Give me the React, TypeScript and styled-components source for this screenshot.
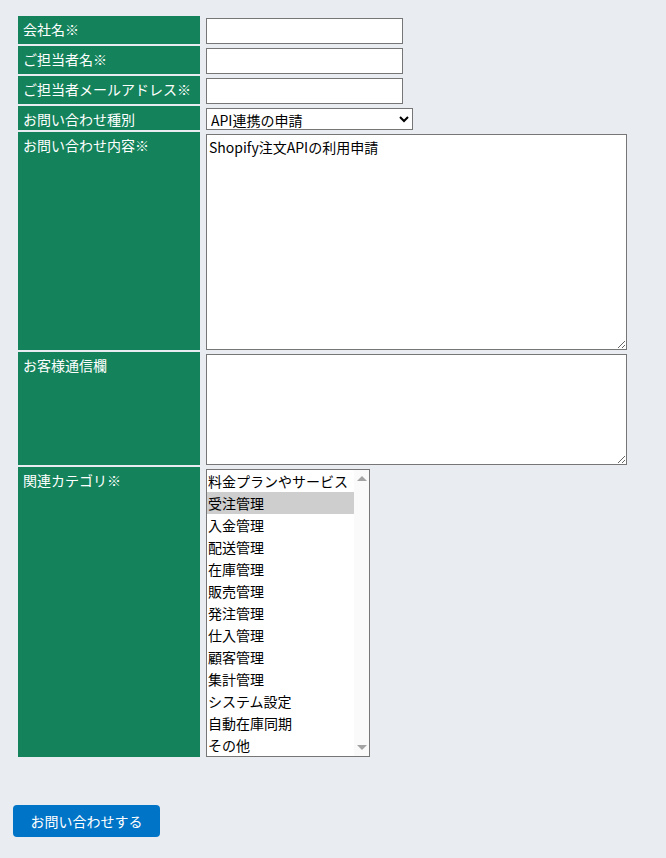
import React, { FC, useState } from 'react';
import styled, { createGlobalStyle } from 'styled-components';

const GlobalStyle = createGlobalStyle`
  body {
    margin: 0;
    background: #e9ecf1;
    font-family: "Noto Sans CJK JP", "Noto Sans", sans-serif;
    font-size: 14px;
    color: #000;
  }
`

const categories = [
    '料金プランやサービス',
    '受注管理',
    '入金管理',
    '配送管理',
    '在庫管理',
    '販売管理',
    '発注管理',
    '仕入管理',
    '顧客管理',
    '集計管理',
    'システム設定',
    '自動在庫同期',
    'その他',
]

type RowProps = {
    label: string
    children: React.ReactNode
}

const Row: FC<RowProps> = ({label, children}) => (
    <tr>
        <LabelCell>{label}</LabelCell>
        <FieldCell>{children}</FieldCell>
    </tr>
)

// multiple-select list box, drawn by hand so the disabled scrollbar shows like the original
const CategoryList: FC<{ items: string[], initial: string[] }> = ({items, initial}) => {
    const [selected, setSelected] = useState<string[]>(initial)
    const toggle = (item: string) => {
        setSelected(s => s.includes(item) ? s.filter(i => i !== item) : [...s, item])
    }
    return (
        <ListBox role="listbox" aria-multiselectable="true">
            <ListItems>
                {items.map(item => (
                    <ListItem
                        key={item}
                        role="option"
                        aria-selected={selected.includes(item)}
                        $selected={selected.includes(item)}
                        onClick={() => toggle(item)}
                    >
                        {item}
                    </ListItem>
                ))}
            </ListItems>
            <ScrollTrack>
                <ArrowUp />
                <ArrowDown />
            </ScrollTrack>
        </ListBox>
    )
}

const App: FC = () => {
    return (
        <>
            <GlobalStyle />
            <Form onSubmit={e => e.preventDefault()}>
                <FormTable>
                    <tbody>
                        <Row label="会社名※"><TextInput type="text" /></Row>
                        <Row label="ご担当者名※"><TextInput type="text" /></Row>
                        <Row label="ご担当者メールアドレス※"><TextInput type="email" /></Row>
                        <Row label="お問い合わせ種別">
                            <KindSelect defaultValue="api">
                                <option value="api">API連携の申請</option>
                                <option value="other">その他</option>
                            </KindSelect>
                        </Row>
                        <Row label="お問い合わせ内容※">
                            <TextArea $height={216} defaultValue="Shopify注文APIの利用申請" />
                        </Row>
                        <Row label="お客様通信欄">
                            <TextArea $height={111} />
                        </Row>
                        <Row label="関連カテゴリ※">
                            <CategoryList items={categories} initial={['受注管理']} />
                        </Row>
                    </tbody>
                </FormTable>
                <SubmitButton type="submit">お問い合わせする</SubmitButton>
            </Form>
        </>
    )
}

export default App

const Form = styled.form`
  padding: 14px 0 20px 13px;
`

const FormTable = styled.table`
  border-spacing: 2px;
  margin-left: 3px;
`

const LabelCell = styled.td`
  width: 172px;
  background: #14835b;
  color: #fff;
  vertical-align: top;
  padding: 3px 5px 0 5px;
  line-height: 20px;
  white-space: nowrap;
`

const FieldCell = styled.td`
  vertical-align: top;
  padding: 2px 4px 0 4px;
`

const fieldBase = `
  display: block;
  box-sizing: border-box;
  margin: 0;
  border: 1px solid #767676;
  background: #fff;
  font-family: "Noto Sans CJK JP", "Noto Sans", sans-serif;
  font-size: 14px;
  color: #000;
`

const TextInput = styled.input`
  ${fieldBase}
  width: 197px;
  height: 26px;
  padding: 1px 2px;
`

const KindSelect = styled.select`
  ${fieldBase}
  width: 207px;
  height: 22px;
  padding: 0;
  border-radius: 0;
`

const TextArea = styled.textarea<{ $height: number }>`
  ${fieldBase}
  width: 421px;
  height: ${p => p.$height}px;
  padding: 2px;
  line-height: 20px;
  resize: both;
`

const ListBox = styled.div`
  ${fieldBase}
  display: flex;
  width: 164px;
  height: 288px;
  overflow: hidden;
  cursor: default;
  user-select: none;
`

const ListItems = styled.div`
  flex: 1;
  min-width: 0;
  overflow: hidden;
`

const ListItem = styled.div<{ $selected: boolean }>`
  height: 22px;
  line-height: 22px;
  padding: 0 1px;
  white-space: nowrap;
  background: ${p => p.$selected ? '#cecece' : 'transparent'};
`

const ScrollTrack = styled.div`
  width: 15px;
  flex: none;
  background: #fbfafa;
  display: flex;
  flex-direction: column;
  justify-content: space-between;
  align-items: center;
  padding: 6px 0;
`

const ArrowUp = styled.span`
  width: 0;
  height: 0;
  border-left: 5px solid transparent;
  border-right: 5px solid transparent;
  border-bottom: 5px solid #a3a3a3;
`

const ArrowDown = styled(ArrowUp)`
  border-bottom: none;
  border-top: 5px solid #a3a3a3;
`

const SubmitButton = styled.button`
  display: block;
  margin-top: 46px;
  width: 147px;
  height: 32px;
  border: none;
  border-radius: 4px;
  background: #0075c8;
  color: #fff;
  font-family: "Noto Sans CJK JP", "Noto Sans", sans-serif;
  font-size: 14px;
  cursor: pointer;
`
